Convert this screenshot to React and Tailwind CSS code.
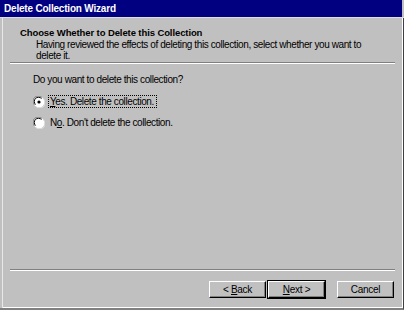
export default function App() {
  const font = { fontFamily: '"Liberation Sans", Arial, sans-serif' };
  return (
    <div className="w-[404px] h-[310px] bg-[#c0c0c0] flex flex-col overflow-hidden text-black" style={font}>
      <div className="h-[17px] bg-[#000080] text-white font-bold text-[10px] tracking-[-0.2px] leading-[17px] pl-[4px] shrink-0 mr-[2px]">
        Delete Collection Wizard
      </div>
      <div className="h-[1px] bg-[#dfdfdf] shrink-0" />
      <div className="flex-1 flex border-r border-r-[#404040] border-b-[2px] border-b-[#808080]">
        <div className="w-[2px] shrink-0" />
        <div className="w-[1px] bg-[#e8e8e8] shrink-0" />
        <div className="flex-1 flex flex-col border-r border-r-white border-b border-b-white">
          <div className="pl-[17px] pt-[9px] h-[44px] shrink-0 text-[10px]">
            <div className="font-bold text-[9.5px] tracking-[-0.1px] leading-[12px]">Choose Whether to Delete this Collection</div>
            <div className="pl-[16px] leading-[11px] tracking-[-0.4px]">
              Having reviewed the effects of deleting this collection, select whether you want to
              <br />
              delete it.
            </div>
          </div>
          <div className="ml-[7px] mr-[7px] h-[2px] border-t border-t-[#808080] border-b border-b-white shrink-0" />
          <div className="flex-1 pl-[30px] pt-[10px] text-[10px] tracking-[-0.4px] leading-[12px]">
            <div>Do you want to delete this collection?</div>
            <div className="flex items-center mt-[9px] h-[13px]">
              <Radio checked />
              <span className="ml-[3px] pl-[1px] pr-[2px] h-[13px] leading-[11px] border border-dotted border-black">
                <u>Y</u>es. Delete the collection.
              </span>
            </div>
            <div className="flex items-center mt-[8px] h-[13px]">
              <Radio />
              <span className="ml-[5px]">
                N<u>o</u>. Don't delete the collection.
              </span>
            </div>
          </div>
          <div className="ml-[7px] mr-[7px] h-[2px] border-t border-t-[#808080] border-b border-b-white shrink-0" />
          <div className="h-[36px] shrink-0 flex items-start pt-[9px] justify-end pr-[7px] text-[10px] tracking-[-0.3px]">
            <Button><span>&lt; <u>B</u>ack</span></Button>
            <Button def><span><u>N</u>ext &gt;</span></Button>
            <div className="w-[10px]" />
            <Button>Cancel</Button>
          </div>
        </div>
      </div>
    </div>
  );
}

function Radio({ checked }) {
  return (
    <svg width="12" height="12" viewBox="0 0 12 12" className="shrink-0">
      <circle cx="6" cy="6" r="5.5" fill="#fff" />
      <path d="M1.5 9 A5 5 0 0 1 9 1.5" stroke="#808080" fill="none" strokeWidth="1" />
      <path d="M2.5 8.5 A4 4 0 0 1 8.5 2.5" stroke="#000" fill="none" strokeWidth="1" />
      <path d="M3 10.5 A5 5 0 0 0 10.5 3" stroke="#dfdfdf" fill="none" strokeWidth="1" />
      {checked && <circle cx="6" cy="6" r="1.6" fill="#000" />}
    </svg>
  );
}

function Button({ children, def }) {
  return (
    <div className={def ? "border border-black" : "border border-transparent"}>
      <div className="w-[57px] h-[17px] flex items-center justify-center border-t border-l border-t-white border-l-white border-r border-b border-r-black border-b-black shadow-[inset_-1px_-1px_0_#808080]">
        {children}
      </div>
    </div>
  );
}
